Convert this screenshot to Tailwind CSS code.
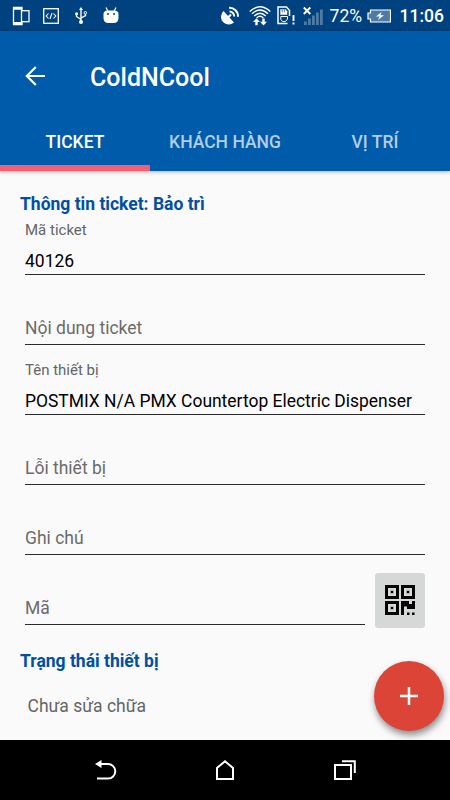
<!DOCTYPE html>
<html lang="vi">
<head>
    <meta charset="UTF-8">
    <meta name="viewport" content="width=device-width, initial-scale=1.0">
    <title>ColdNCool</title>
    <script src="https://cdn.jsdelivr.net/npm/@tailwindcss/browser@4"></script>
</head>
<body class="bg-black">
    <div class="relative w-[450px] h-[800px] flex flex-col overflow-hidden bg-[#fafafa] font-['Roboto',sans-serif] text-black">

        <!-- Status bar -->
        <div class="h-[31px] shrink-0 flex items-center bg-[#00427f] text-white">
            <svg class="ml-3 w-[18px] h-5" viewBox="0 0 18 20" fill="none" stroke="#fff" stroke-width="1.3">
                <path d="M10 4V1.500H1.500v17H10V16"/>
                <path d="M1.500 2.700H10M1.500 17H10" stroke-width="2"/>
                <rect x="9.500" y="4.700" width="7.500" height="11"/>
            </svg>
            <svg class="ml-[13px] w-4 h-4" viewBox="0 0 16 16" fill="none" stroke="#fff" stroke-width="1.3">
                <rect x=".7" y=".7" width="14.600" height="14.600"/>
                <path d="M5.500 5.500L3.200 8l2.300 2.500M10.500 5.500L12.800 8l-2.300 2.500M9 5l-2 6" stroke-width="1.100"/>
            </svg>
            <svg class="ml-4 w-3 h-[17px]" viewBox="0 0 12 17" fill="none" stroke="#fff" stroke-width="1.400">
                <path d="M6 2v12M1.500 7v2.500L6 12.500M10.500 7v1.500L6 11"/>
                <path d="M6 0l2 3H4z" fill="#fff" stroke="none"/>
                <circle cx="6" cy="15" r="2" fill="#fff" stroke="none"/>
                <circle cx="1.600" cy="6.800" r="1.500" fill="#fff" stroke="none"/>
                <circle cx="10.300" cy="5.800" r="1.300" stroke-width="1"/>
            </svg>
            <svg class="ml-4 w-4 h-[17px]" viewBox="0 0 16 17" fill="#fff">
                <path d="M3 .5l2 4M13 .5l-2 4" stroke="#fff" stroke-width="1.200"/>
                <path d="M.5 7Q.5 3.500 5 3.500h6q4.500 0 4.500 3.500v4q0 5-5 5h-5q-5 0-5-5z"/>
                <circle cx="5" cy="7" r="1" fill="#00427f"/>
                <circle cx="11" cy="7" r="1" fill="#00427f"/>
            </svg>

            <svg class="ml-auto w-5 h-5" viewBox="0 0 20 20" fill="none" stroke="#fff">
                <path d="M3.500 5A7.500 7.500 0 1 0 14 16.500z" fill="#fff" stroke="none"/>
                <path d="M8 11.500l3-3" stroke-width="2.200"/>
                <path d="M9.500 5.500a4.700 4.700 0 0 1 4.700 5M9 1.800a8.500 8.500 0 0 1 9 9" stroke-width="1.900"/>
            </svg>
            <svg class="ml-[9px] w-[22px] h-5" viewBox="0 0 22 20" fill="none" stroke="#fff" stroke-width="1.400">
                <path d="M.7 5.500q10.300-9.500 20.600 0M3 7.800q8-7.600 16 0M5.300 10q5.700-5.600 11.400 0M7.700 12q3.300-3.400 6.600 0"/>
                <path d="M4 16l3.500-3.700L11 16H8.700v3.300H6.300V16zM11 15.800l3.500 3.700 3.500-3.700h-2.300v-3.300h-2.400v3.300z" fill="#fff" stroke="none"/>
            </svg>
            <svg class="ml-1.5 w-[18px] h-[19px]" viewBox="0 0 18 19" fill="none" stroke="#fff" stroke-width="1.500">
                <path d="M12.500 10V4.500L9.500 1H1v16.500h9.500"/>
                <path d="M3.300 3.300h5.200l1.700 2v3.400H3.300z" fill="#fff" stroke="none"/>
                <path d="M5.200 3.300v3M7.300 3.300v3" stroke="#00427f" stroke-width=".7"/>
                <path d="M3.800 10.500h6.700v2.500l-2 2.500H5.500l-1.700-2z" stroke-width="1"/>
                <path d="M16.500 9v6M16.500 16.500v2" stroke-width="1.900"/>
            </svg>
            <svg class="ml-2 w-5 h-5" viewBox="0 0 20 20">
                <path d="M1 15.500h2.800v3.500H1zM5 12.500h2.800V19H5zM9 9.500h2.800V19H9zM13 6.500h2.800V19H13zM17 3.500h2.800V19H17z" fill="#4d7ba6"/>
                <path d="M.8 1.500l6.500 6.500M7.300 1.500L.8 8" stroke="#fff" stroke-width="1.900"/>
            </svg>
            <span class="ml-[7px] w-8 pt-0.5 text-[17.5px] leading-none whitespace-nowrap">72%</span>
            <svg class="ml-[5px] w-6 h-[14px]" viewBox="0 0 24 14">
                <path d="M3.500 1h20v12h-20v-3H1V4h2.500z" fill="#4d7ba6" stroke="#fff" stroke-width="1.200"/>
                <path d="M14.500 3L9 7.500h3.500L11 11l6-4.800h-3.500z" fill="#fff"/>
            </svg>
            <span class="ml-[9px] mr-1.5 pt-0.5 text-[17.5px] leading-none font-medium whitespace-nowrap">11:06</span>
        </div>

        <!-- Toolbar and tabs -->
        <header class="z-10 h-[140px] shrink-0 flex flex-col bg-[#005baa] text-white shadow-[0_1px_4px_rgba(0,0,0,0.3)]">
            <div class="h-[91px] flex items-center">
                <svg class="ml-[25px] mb-px w-5 h-5" viewBox="0 0 20 20" fill="none" stroke="#fff" stroke-width="2.200">
                    <path d="M20 10H2M10.800 1L1.800 10l9 9"/>
                </svg>
                <h1 class="ml-[45px] pt-px text-[25px] leading-none font-medium">ColdNCool</h1>
            </div>
            <nav class="flex-1 grid grid-cols-3 text-center text-[17.5px] font-medium">
                <a class="border-b-6 border-[#f55f74] pt-[7px]">TICKET</a>
                <a class="pt-[7px] text-[#b2cee5]">KHÁCH HÀNG</a>
                <a class="pt-[7px] text-[#b2cee5]">VỊ TRÍ</a>
            </nav>
        </header>

        <!-- Ticket form -->
        <main class="flex-1 px-5">
            <h2 class="pt-[21px] h-[44px] text-[17.5px] leading-6 font-bold text-[#004fa3]">Thông tin ticket: Bảo trì</h2>
            <div class="mx-[5px] h-[60px] flex flex-col border-b border-[#2b2b2b]">
                <label class="pt-[5px] text-[15px] leading-5 text-[#656565]">Mã ticket</label>
                <span class="mt-auto mb-px text-[17.5px] leading-6">40126</span>
            </div>
            <div class="mx-[5px] h-[70px] flex items-end border-b border-[#2b2b2b]">
                <span class="mb-1 text-[17.5px] leading-6 text-[#6b6b6b]">Nội dung ticket</span>
            </div>
            <div class="mx-[5px] h-[70px] flex flex-col border-b border-[#2b2b2b]">
                <label class="pt-[15px] text-[15px] leading-5 text-[#656565]">Tên thiết bị</label>
                <span class="mt-auto mb-px text-[17.45px] leading-6 whitespace-nowrap">POSTMIX N/A PMX Countertop Electric Dispenser</span>
            </div>
            <div class="mx-[5px] h-[70px] flex items-end border-b border-[#2b2b2b]">
                <span class="mb-1 text-[17.5px] leading-6 text-[#6b6b6b]">Lỗi thiết bị</span>
            </div>
            <div class="mx-[5px] h-[70px] flex items-end border-b border-[#2b2b2b]">
                <span class="mb-1 text-[17.5px] leading-6 text-[#6b6b6b]">Ghi chú</span>
            </div>
            <div class="mx-[5px] flex gap-[10px]">
                <div class="w-[340px] h-[70px] flex items-end border-b border-[#2b2b2b]">
                    <span class="mb-1 text-[17.5px] leading-6 text-[#6b6b6b]">Mã</span>
                </div>
                <button class="mt-[17.500px] w-[50px] h-[55px] flex items-center justify-center rounded-[3px] bg-[#d6d8d7]">
                    <svg class="w-[30px] h-[30px]" viewBox="0 0 30 30">
                        <path d="M1.500 1.500h11v11h-11zM17.500 1.500h11v11h-11zM1.500 17.500h11v11h-11z" fill="none" stroke="#000" stroke-width="3"/>
                        <path d="M5.700 5.700h2.600v2.600H5.700zM21.700 5.700h2.600v2.600h-2.600zM5.700 21.700h2.600v2.600H5.700z" fill="#000"/>
                        <path d="M16 16h8v3h3v-3h3v8h-8v-2.500h-3V30h-3zM22 27.500h2.500V30H22zM27 27.500h2.500V30H27z" fill="#000"/>
                    </svg>
                </button>
            </div>
            <h2 class="mt-[21px] text-[17.5px] leading-6 font-bold text-[#004fa3]">Trạng thái thiết bị</h2>
            <p class="mt-[21px] ml-[7.500px] text-[17.5px] leading-6 text-[#656565]">Chưa sửa chữa</p>
        </main>

        <!-- Floating add button -->
        <button class="absolute left-[374px] top-[661px] w-[70px] h-[70px] flex items-center justify-center rounded-full bg-[#db4437] shadow-[1px_4px_7px_rgba(0,0,0,0.45)]">
            <svg class="w-[18px] h-[18px]" viewBox="0 0 18 18" stroke="#fff" stroke-width="2.500">
                <path d="M9 0v18M0 9h18"/>
            </svg>
        </button>

        <!-- Navigation bar -->
        <div class="z-10 h-[60px] shrink-0 flex items-center justify-between pl-[95px] pr-[94px] bg-black">
            <svg class="w-[22px] h-5" viewBox="0 0 22 20" fill="none" stroke="#fff" stroke-width="2">
                <path d="M4 4h9a7.300 7.300 0 0 1 0 14.600H2"/>
                <path d="M0 4l6.500-4v8z" fill="#fff" stroke="none"/>
            </svg>
            <svg class="mr-px w-[18px] h-5" viewBox="0 0 18 20" fill="none" stroke="#fff" stroke-width="2">
                <path d="M1 19V8l8-6.700L17 8v11z"/>
            </svg>
            <svg class="w-[22px] h-5" viewBox="0 0 22 20" fill="none" stroke="#fff" stroke-width="2">
                <path d="M1 5h16v14H1zM8 1.200h12.800V13"/>
            </svg>
        </div>
    </div>
</body>
</html>
